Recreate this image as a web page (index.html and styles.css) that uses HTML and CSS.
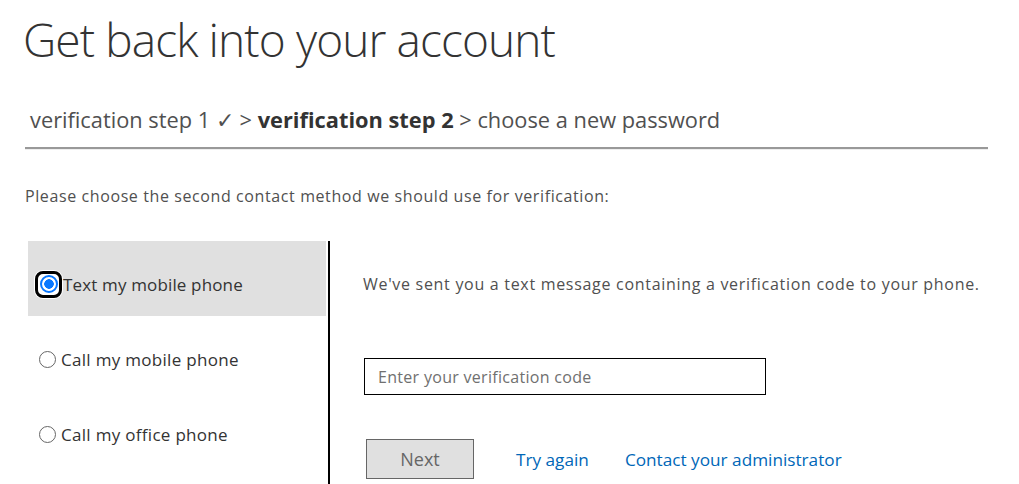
FILE: index.html
```html
<!DOCTYPE html>
<html lang="en">

<head>
  <meta charset="UTF-8">
  <meta name="viewport" content="width=device-width, initial-scale=1.0">
  <title>Get back into your account</title>
  <link rel="stylesheet" href="styles.css">
</head>

<body>
  <div class="page">
    <h1>Get back into your account</h1>
    <div class="steps">
      verification step 1 &#10003; &gt; <strong>verification step 2</strong> &gt; choose a new password
    </div>
    <hr class="divider">
    <p class="intro">Please choose the second contact method we should use for verification:</p>

    <div class="verify">
      <div class="methods">
        <label class="method selected">
          <span class="focus-ring"><input type="radio" name="method" checked></span>
          <span>Text my mobile phone</span>
        </label>
        <label class="method">
          <input type="radio" name="method">
          <span>Call my mobile phone</span>
        </label>
        <label class="method">
          <input type="radio" name="method">
          <span>Call my office phone</span>
        </label>
      </div>

      <div class="panel">
        <p class="message">We've sent you a text message containing a verification code to your phone.</p>
        <input class="code" type="text" placeholder="Enter your verification code">
        <div class="actions">
          <button class="next">Next</button>
          <a href="#">Try again</a>
          <a href="#">Contact your administrator</a>
        </div>
      </div>
    </div>
  </div>
</body>

</html>
```

FILE: styles.css
```css
body {
  margin: 0;
  font-family: "Open Sans", "Noto Sans", sans-serif;
  color: #505050;
  background: #fff;
}

.page {
  padding: 0 31px 0 25px;
}

h1 {
  margin: 8px 0 0 -2px;
  font-size: 46px;
  font-weight: 300;
  line-height: 62px;
  color: #333;
  letter-spacing: -0.9px;
}

.steps {
  margin: 35px 0 0 5px;
  font-size: 21.8px;
  line-height: 30px;
  color: #505050;
}

.steps strong {
  font-weight: 700;
  color: #333;
}

.divider {
  margin: 12px 0 0;
  border: 0;
  border-top: 2px solid #999;
  border-bottom: 1px solid #eee;
}

.intro {
  margin: 36px 0 0;
  font-size: 16px;
  line-height: 20px;
  letter-spacing: 0.6px;
  color: #505050;
}

.verify {
  display: flex;
  margin: 35px 0 0 3px;
}

.methods {
  width: 300px;
  padding-bottom: 30px;
  border-right: 2px solid #000;
  display: flex;
  flex-direction: column;
}

.method {
  height: 75px;
  box-sizing: border-box;
  display: flex;
  align-items: center;
  gap: 5px;
  padding: 11px 0 0 11px;
  font-size: 17px;
  letter-spacing: 0.3px;
  color: #333;
  cursor: pointer;
}

.method.selected {
  background: #e0e0e0;
  margin-right: 2px;
  padding-left: 7px;
  gap: 1px;
  letter-spacing: 0.15px;
}

.method input {
  appearance: none;
  width: 17px;
  height: 17px;
  margin: 0;
  border: 1px solid #666;
  border-radius: 50%;
  background: #fff;
}

.focus-ring {
  display: flex;
  padding: 1.5px;
  border: 3px solid #000;
  border-radius: 8px;
  background: #fff;
  box-shadow: 0 0 0 1px #fff;
}

.method input:checked {
  width: 18px;
  height: 18px;
  border: 2px solid #0a78ff;
  background: radial-gradient(circle, #0a78ff 0 4.5px, #fff 5px);
}

.panel {
  padding: 33px 0 0 33px;
}

.message {
  margin: 0;
  font-size: 16px;
  line-height: 20px;
  letter-spacing: 0.7px;
}

.code {
  display: block;
  margin: 64px 0 0 1px;
  width: 402px;
  height: 37px;
  box-sizing: border-box;
  border: 1px solid #000;
  padding: 0 13px;
  font-family: inherit;
  font-size: 16px;
  letter-spacing: 0.3px;
  color: #333;
}

.code::placeholder {
  color: #707070;
}

.actions {
  display: flex;
  align-items: center;
  margin: 44px 0 0 3px;
}

.next {
  width: 108px;
  height: 40px;
  background: #e0e0e0;
  border: 1px solid #666;
  font-family: inherit;
  font-size: 18px;
  color: #666;
  margin-right: 42px;
}

.actions a {
  font-size: 17.2px;
  color: #0067b8;
  text-decoration: none;
  margin-right: 36px;
}
```
